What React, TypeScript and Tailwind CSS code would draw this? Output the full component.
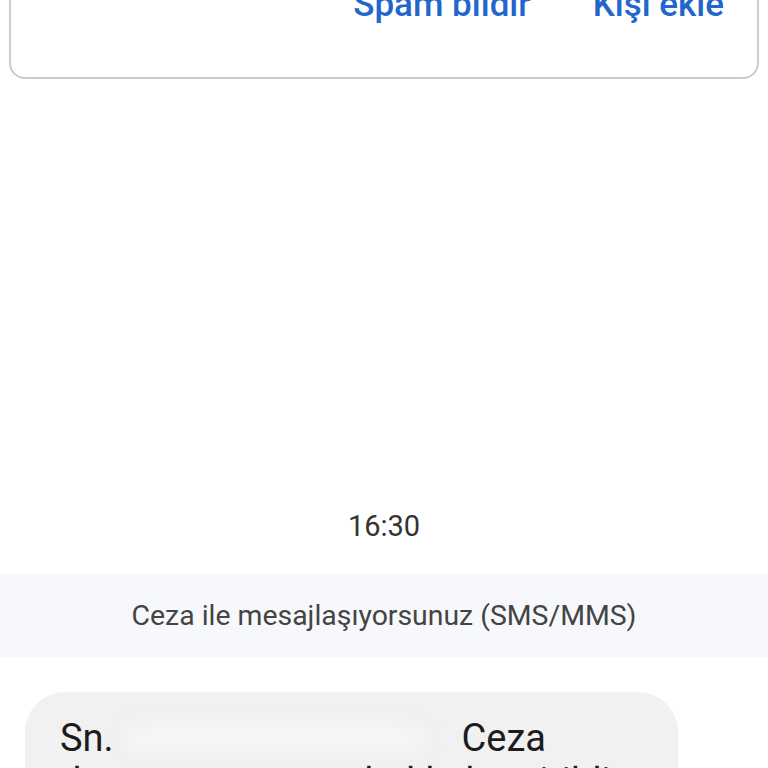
export default function App() {
  return (
    <div
      className="w-[768px] h-[768px] overflow-hidden bg-white"
      style={{ fontFamily: "Roboto, 'Noto Sans', sans-serif" }}
    >
      {/* Unknown sender card (top cut off) */}
      <div className="mx-[9px] -mt-[60px] pt-[43px] pb-[52px] pr-[33px] border-2 border-[#cbcbcb] rounded-[16px] flex justify-end gap-[62px]">
        <span className="text-[35px] leading-[40px] font-medium text-[#2366cb]">Spam bildir</span>
        <span className="text-[35px] leading-[40px] font-medium text-[#2366cb]">Kişi ekle</span>
      </div>

      {/* Timestamp */}
      <div className="mt-[429px] text-center text-[29px] leading-[36px] text-[#333333]">16:30</div>

      {/* Conversation info band */}
      <div className="mt-[30px] h-[83px] pt-[2px] bg-[#f7f8fb] flex items-center justify-center">
        <span className="text-[28.4px] text-[#444444]">Ceza ile mesajlaşıyorsunuz (SMS/MMS)</span>
      </div>

      {/* Incoming message bubble */}
      <div className="mt-[35px] ml-[25px] w-[653px] rounded-[40px] bg-[#f1f1f1] pl-[35px] pr-[30px] pt-[24px] pb-[24px] text-[38px] leading-[44px] text-[#1c1c1c]">
        <div className="flex">
          <span>Sn.</span>
          <span className="w-[300px] mx-[10px] my-[10px] rounded-full bg-[#f6f6f6] blur-sm" />
          <span className="ml-[28px]">Ceza</span>
        </div>
        <div className="flex">
          <span>d</span>
          <span className="ml-[250px]">tahakkuk ettirildi</span>
        </div>
      </div>
    </div>
  );
}
